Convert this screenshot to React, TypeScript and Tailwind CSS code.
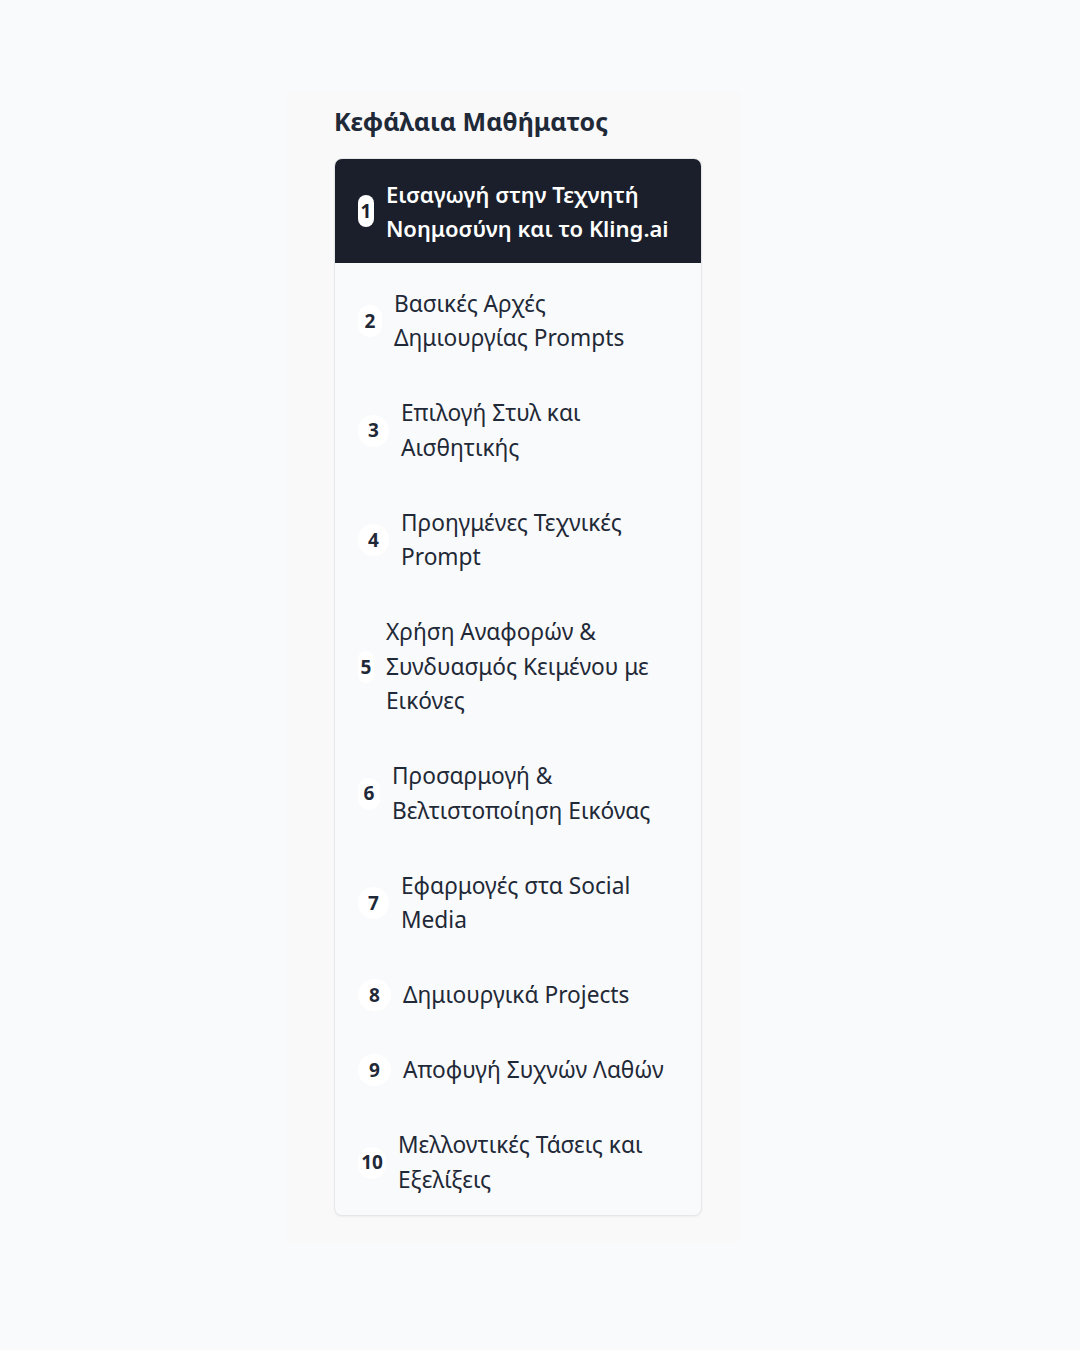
import React from "react";

const items: { n: number; t: string; w: number }[] = [
  { n: 1, t: "Εισαγωγή στην Τεχνητή Νοημοσύνη και το Kling.ai", w: 16 },
  { n: 2, t: "Βασικές Αρχές Δημιουργίας Prompts", w: 24 },
  { n: 3, t: "Επιλογή Στυλ και Αισθητικής", w: 31 },
  { n: 4, t: "Προηγμένες Τεχνικές Prompt", w: 31 },
  { n: 5, t: "Χρήση Αναφορών & Συνδυασμός Κειμένου με Εικόνες", w: 16 },
  { n: 6, t: "Προσαρμογή & Βελτιστοποίηση Εικόνας", w: 22 },
  { n: 7, t: "Εφαρμογές στα Social Media", w: 31 },
  { n: 8, t: "Δημιουργικά Projects", w: 33 },
  { n: 9, t: "Αποφυγή Συχνών Λαθών", w: 33 },
  { n: 10, t: "Μελλοντικές Τάσεις και Εξελίξεις", w: 28 },
];

export default function App() {
  return (
    <div
      className="min-h-[1350px] w-[1080px] bg-[#f8fafc] pl-[287px] pt-[92px]"
      style={{ fontFamily: '"Noto Sans", "Open Sans", sans-serif' }}
    >
      <div className="w-[454px] bg-[#f9f9fa] pl-[47px] pt-[12px] pb-[26px]">
        <h2 className="text-[25px] leading-[35px] font-bold text-[#1f2937] mb-[19px]">
          Κεφάλαια Μαθήματος
        </h2>
        <div className="w-[368px] rounded-[8px] border border-[#e5e7eb] bg-[#f9fafb] shadow-[0_1px_2px_rgba(0,0,0,0.05)] overflow-hidden flex flex-col gap-[6.5px] pb-[1px]">
          {items.map((it) => {
            const active = it.n === 1;
            return (
              <div
                key={it.n}
                className={`flex items-center gap-[12px] pl-[23px] ${
                  active
                    ? "bg-[#1a1f2b] text-white pr-[15px] py-[17.5px]"
                    : "text-[#1f2937] pr-[23px] py-[17px]"
                }`}
              >
                <span
                  className={`shrink-0 h-[32px] rounded-full flex items-center justify-center text-[19px] font-bold ${
                    active ? "bg-white text-[#1a1f2b]" : "bg-white text-[#1f2937]"
                  }`}
                  style={{ width: it.w }}
                >
                  {it.n}
                </span>
                <span
                  className={`flex-1 leading-[34.5px] ${
                    active ? "text-[22px] font-semibold" : "text-[22.7px] font-normal"
                  }`}
                >
                  {it.t}
                </span>
              </div>
            );
          })}
        </div>
      </div>
    </div>
  );
}
